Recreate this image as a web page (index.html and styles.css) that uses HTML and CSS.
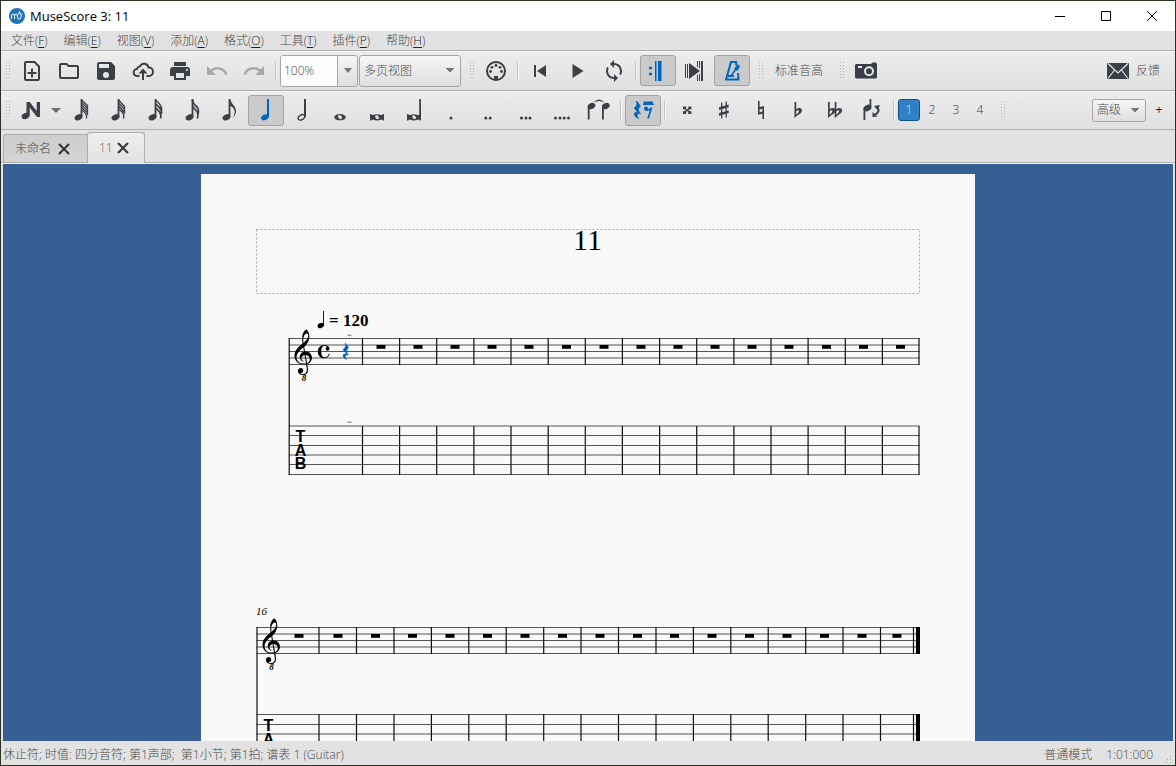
FILE: index.html
```html
<!DOCTYPE html>
<html lang="zh-CN">
<head>
<meta charset="utf-8">
<title>MuseScore 3: 11</title>
<link rel="stylesheet" href="styles.css">
</head>
<body>
<svg class="defs" aria-hidden="true">
  <defs>
    <symbol id="i-new" viewBox="0 0 24 24"><path fill="none" stroke="currentColor" stroke-width="2" stroke-linejoin="round" d="M6 3h8.500l4.500 4.500V20a1 1 0 0 1-1 1H6a1 1 0 0 1-1-1V4a1 1 0 0 1 1-1z"/><path d="M11 9.500h2V13h3.500v2H13v3.500h-2V15H7.500v-2H11z"/></symbol>
    <symbol id="i-open" viewBox="0 0 24 24"><path d="M20 6h-8l-2-2H4a2 2 0 0 0-2 2v12c0 1.100.9 2 2 2h16a2 2 0 0 0 2-2V8a2 2 0 0 0-2-2zm0 12H4V6h5.200l2 2H20z"/></symbol>
    <symbol id="i-save" viewBox="0 0 24 24"><path d="M17 3H5a2 2 0 0 0-2 2v14c0 1.100.9 2 2 2h14a2 2 0 0 0 2-2V7l-4-4zm-5 16a3 3 0 1 1 0-6 3 3 0 0 1 0 6zm3-10H5V5h10v4z"/></symbol>
    <symbol id="i-cloud" viewBox="0 0 24 24"><path fill="none" stroke="currentColor" stroke-width="2" d="M8.500 17H6.500a3.500 3.500 0 0 1-.6-7A4 4 0 0 1 9 7.200 4.500 4.500 0 0 1 17.500 8.500 4.200 4.200 0 0 1 18 17H15.500"/><path d="M12 9.500l4.500 5H13V21h-2v-6.500H7.500z"/></symbol>
    <symbol id="i-print" viewBox="0 0 24 24"><path d="M19 8H5a3 3 0 0 0-3 3v6h4v4h12v-4h4v-6a3 3 0 0 0-3-3zm-3 11H8v-5h8v5zm3-7a1 1 0 1 1 0-2 1 1 0 0 1 0 2zM18 3H6v4h12V3z"/></symbol>
    <symbol id="i-undo" viewBox="0 0 24 24"><path d="M12.500 8c-2.650 0-5.050.99-6.900 2.600L2 7v9h9l-3.620-3.620c1.390-1.160 3.160-1.880 5.120-1.880 3.540 0 6.550 2.310 7.600 5.500l2.370-.78C21.080 11.030 17.150 8 12.500 8z"/></symbol>
    <symbol id="i-redo" viewBox="0 0 24 24"><path d="M11.500 8c2.650 0 5.050.99 6.900 2.600L22 7v9h-9l3.620-3.620c-1.390-1.160-3.160-1.880-5.120-1.880-3.540 0-6.550 2.310-7.600 5.500l-2.370-.78C2.920 11.030 6.850 8 11.500 8z"/></symbol>
    <symbol id="i-midi" viewBox="0 0 24 24"><circle cx="12" cy="12" r="9" fill="none" stroke="currentColor" stroke-width="2"/><circle cx="6.500" cy="12.500" r="1.400"/><circle cx="8" cy="8.300" r="1.400"/><circle cx="12" cy="6.500" r="1.400"/><circle cx="16" cy="8.300" r="1.400"/><circle cx="17.500" cy="12.500" r="1.400"/><path d="M10 17h4v4h-4z"/></symbol>
    <symbol id="i-rewind" viewBox="0 0 24 24"><path d="M6 6h2v12H6zM18 6v12L9 12z"/></symbol>
    <symbol id="i-play" viewBox="0 0 24 24"><path d="M7.500 5l11 7-11 7z"/></symbol>
    <symbol id="i-loop" viewBox="0 0 24 24"><path d="M12 4V1L8 5l4 4V6c3.310 0 6 2.690 6 6 0 1.010-.25 1.970-.7 2.800l1.460 1.460C19.540 15.030 20 13.570 20 12c0-4.420-3.580-8-8-8zm0 14c-3.310 0-6-2.690-6-6 0-1.010.25-1.970.7-2.800L5.240 7.740C4.460 8.970 4 10.430 4 12c0 4.420 3.580 8 8 8v3l4-4-4-4v3z"/></symbol>
    <symbol id="i-repeat" viewBox="0 0 24 24"><circle cx="4.500" cy="9" r="1.600"/><circle cx="4.500" cy="15" r="1.600"/><path d="M9 2h1.500v20H9zM12 2h3.500v20H12z"/></symbol>
    <symbol id="i-pan" viewBox="0 0 24 24"><path d="M2 5h1v14H2zM4 5h1v14H4zM6 4l11 8-11 8zM14 2h1v6.500l-1-1zM14 16.500l1-1V22h-1zM16 2h1v7.500l-1-1zM16 15.500l1-1V22h-1zM18 2h2v20h-2z"/></symbol>
    <symbol id="i-metro" viewBox="0 0 24 24"><path fill="none" stroke="currentColor" stroke-width="2" d="M16.500 7L16 3h-5L6 20.500h12.500L18 14M8 17h6"/><path fill="none" stroke="currentColor" stroke-width="1.500" d="M10.500 17.500L19 6"/><path d="M14 9.500l4-3.500 2 2-3 4z"/></symbol>
    <symbol id="i-camera" viewBox="0 0 24 24"><path fill-rule="evenodd" d="M3 5h14l1.500-1.500H22L23 5v13.500l-1 1H2l-1-1V6l1-1zM15 7.200a5 5 0 1 0 0 10 5 5 0 0 0 0-10zM4 7v2h4V7z"/><circle cx="15" cy="12.200" r="3"/></symbol>
    <symbol id="i-mail" viewBox="0 0 24 24"><rect x="1" y="4" width="22" height="16" rx="1"/><path fill="none" stroke="#e6e6e6" stroke-width="1.200" d="M2 4.500l10 9.500 10-9.500M2 19.500L8.500 11M22 19.500L15.500 11"/></symbol>

    <symbol id="i-input" viewBox="0 0 24 24"><ellipse cx="6.500" cy="18" rx="4" ry="3" transform="rotate(-25 6.500 18)"/><path d="M7.500 4h3.200l7 9V4H21v15h-3l-7.300-9.500V18l-3.200-1z"/></symbol>
    <symbol id="head" viewBox="0 0 24 24"><ellipse cx="9.500" cy="19.300" rx="4.100" ry="2.900" transform="rotate(-25 9.500 19.300)"/><path d="M11.600 1h1.800v18h-1.800z"/></symbol>
    <symbol id="i-n64" viewBox="0 0 24 24"><use href="#head"/><path fill="none" stroke="currentColor" stroke-width="1.300" d="M12.500 2l6 5.500M12.500 4.500l6 5.500M12.500 7l6 5.500M12.500 9.500l6 5.500M12.500 12q6 3.500 5 8.500M18.500 7v10"/></symbol>
    <symbol id="i-n32" viewBox="0 0 24 24"><use href="#head"/><path fill="none" stroke="currentColor" stroke-width="1.400" d="M12.500 2l6 6.500M12.500 5l6 6.500M12.500 8l6 6.500M12.500 11q6.500 4 5 9.500M18.500 8v8"/></symbol>
    <symbol id="i-n16b" viewBox="0 0 24 24"><use href="#head"/><path fill="none" stroke="currentColor" stroke-width="1.600" d="M12.500 2q6 5 6 8.500M12.500 6q6 4.500 6 8.500M12.500 10q7 5 5 10.500M18.500 10v6"/></symbol>
    <symbol id="i-n16" viewBox="0 0 24 24"><use href="#head"/><path fill="none" stroke="currentColor" stroke-width="1.700" d="M12.500 2q0 3 3.500 6 3.500 3 2 8M12.500 8q1 2 3.500 4.500 3 3 1.300 8"/></symbol>
    <symbol id="i-n8" viewBox="0 0 24 24"><use href="#head"/><path d="M12 1h1.200c.5 4.500 6 7 5.800 12.500-.1 2.500-1.500 5-2.700 6 1-3 1.700-5 1.200-7-.6-2.500-3-4.500-5.500-5z"/></symbol>
    <symbol id="i-n4" viewBox="0 0 24 24"><ellipse cx="11" cy="19.300" rx="4" ry="2.700" transform="rotate(-25 11 19.300)"/><path d="M13 1h2v18h-2z"/></symbol>
    <symbol id="i-n2" viewBox="0 0 24 24"><ellipse cx="10.500" cy="19.300" rx="3.600" ry="2.300" fill="none" stroke="currentColor" stroke-width="1.400" transform="rotate(-30 10.500 19.300)"/><path d="M13 1h2v18h-2z"/></symbol>
    <symbol id="i-n1" viewBox="0 0 24 24"><path fill-rule="evenodd" d="M6.300 19.200a5.700 3.100 0 1 0 11.400 0 5.700 3.100 0 1 0-11.400 0zM10 17.800c.8-1.200 2.600-1 3.500.4.900 1.500.6 3-.7 3s-3.500-2-2.800-3.400z"/></symbol>
    <symbol id="i-breve" viewBox="0 0 24 24"><path d="M5 16h1.500v6.500H5zM17.500 16H19v6.500h-1.500z"/><path fill-rule="evenodd" d="M6 17h2.500c2-1 5-1 7 0H18v4.700h-2.500c-2 1-5 1-7 0H6zM10.300 18c-.6 1.200.8 3.200 2.200 3.200 1.200 0 1.700-1 1.200-2.300-.6-1.600-2.800-2.300-3.400-.9z"/></symbol>
    <symbol id="i-longa" viewBox="0 0 24 24"><use href="#i-breve"/><path d="M17.200 1H19v20h-1.800z"/></symbol>
    <symbol id="i-dot1" viewBox="0 0 24 24"><circle cx="12" cy="20" r="1.500"/></symbol>
    <symbol id="i-dot2" viewBox="0 0 24 24"><circle cx="9.800" cy="20" r="1.500"/><circle cx="14.200" cy="20" r="1.500"/></symbol>
    <symbol id="i-dot3" viewBox="0 0 24 24"><circle cx="8.500" cy="20" r="1.500"/><circle cx="13" cy="20" r="1.500"/><circle cx="17" cy="20" r="1.500"/></symbol>
    <symbol id="i-dot4" viewBox="0 0 24 24"><circle cx="5.500" cy="20" r="1.500"/><circle cx="10" cy="20" r="1.500"/><circle cx="14.200" cy="20" r="1.500"/><circle cx="18.500" cy="20" r="1.500"/></symbol>
    <symbol id="i-tie" viewBox="0 0 24 24"><ellipse cx="4.500" cy="8" rx="4" ry="2.900" transform="rotate(-25 4.500 8)"/><ellipse cx="18.800" cy="8" rx="4" ry="2.900" transform="rotate(-25 18.800 8)"/><path d="M.8 8h1.800v13.500H.8zM15 8h1.800v13.500H15zM6.500 4.500q5.500-6 11 0-5.500-3.200-11 0z"/></symbol>
    <symbol id="i-rest" viewBox="0 0 24 24"><use href="#qrest" x="2.500" y="3" stroke="currentColor" stroke-width=".8"/><path d="M12.500 3.500h9.500v3h-9.500zM12 6h11v1H12z"/><circle cx="15" cy="10.500" r="2"/><path fill="none" stroke="currentColor" stroke-width="1.700" d="M14.500 12q4 .8 6-2.300L17 20.500"/></symbol>
    <symbol id="i-dsharp" viewBox="0 0 24 24"><path d="M8 8.500h3l.2 2 1 .9 1-.9.200-2h3v2.700l-2.300.3-.8.700.8.700 2.300.3V16h-3l-.2-2-1-.9-1 .9L11 16H8v-2.800l2.300-.3.800-.7-.8-.7L8 11.200z"/></symbol>
    <symbol id="i-sharp" viewBox="0 0 24 24"><path d="M9 4.500h1.300v16H9zM13.500 3.500h1.300v16h-1.300zM7 9.200l9.700-2.600v2.700L7 11.900zM7 15l9.700-2.600v2.700L7 17.700z"/></symbol>
    <symbol id="i-nat" viewBox="0 0 24 24"><path fill-rule="evenodd" d="M9 3h1.600v6L15 8v13h-1.600v-5.300L9 16.700zM10.600 11.500v2.800l2.800-.7v-2.800z"/></symbol>
    <symbol id="i-flat" viewBox="0 0 24 24"><path fill-rule="evenodd" d="M8.500 4h1.700v7.200c2-1.900 6-1.800 5.800 1.400-.2 3-4.500 4.400-7.500 7.600zM10.200 13.500v3.200c1.800-1.400 3.100-3.200 2.600-4-.6-.8-1.900-.2-2.600.8z"/></symbol>
    <symbol id="i-dflat" viewBox="0 0 24 24"><use href="#i-flat" x="-3.500"/><use href="#i-flat" x="3.200"/></symbol>
    <symbol id="i-flip" viewBox="0 0 24 24"><ellipse cx="7.500" cy="10" rx="4.200" ry="3" transform="rotate(-30 7.500 10)"/><path d="M3.500 10h1.800v12H3.500zM9.500 1h1.800v8H9.500z"/><path fill="none" stroke="currentColor" stroke-width="2" d="M16.500 9Q21.500 13 14.500 17"/><path d="M14 8l6-1-2.500 5zM12.500 14l5 4.500-5 .5z"/></symbol>

    <path id="qrest" d="M3.200 0C4.500 2 6.200 3.800 6.800 5.200 5.400 6.800 4.600 7.900 5 9.400 5.300 10.600 6.400 11.900 7.200 12.900 5.200 12.200 3.700 12.500 3.600 14 3.500 15.100 4.300 16.200 5.200 17.400 3 16.700.6 14.700.9 12.700 1.200 11.200 2.900 10.900 4.400 11.300L.7 7.200C2.500 5.600 3.500 4.600 3.300 2.800 3.200 1.700 2.600 1 3.200 0z"/>
    <path id="mrest" d="M-4.500 0h9v3.800h-9z"/>
    <path id="gclef" d="M376 415l25 -145c3 -18 3 -18 29 -18c147 0 241 -113 241 -241c0 -113 -67 -198 -168 -238c-14 -6 -15 -5 -13 -17c11 -62 29 -157 29 -214c0 -170 -130 -200 -197 -200c-151 0 -190 98 -190 163c0 62 40 115 107 115c61 0 96 -47 96 -102c0 -58 -36 -85 -67 -94c-23 -7 -32 -10 -32 -17c0 -13 26 -29 80 -29c59 0 159 18 159 166c0 47 -15 134 -27 201c-2 12 -4 11 -15 9c-20 -4 -46 -6 -69 -6c-245 0 -364 165 -364 339c0 202 153 345 297 464c12 10 11 12 9 24c-7 41 -14 106 -14 164c0 104 24 229 98 311c20 22 51 48 65 48c11 0 37 -28 52 -50c41 -60 65 -146 65 -233c0 -153 -82 -280 -190 -381c-6 -6 -8 -7 -6 -19zM470 943c-61 0 -133 -96 -133 -252c0 -32 2 -66 6 -92c2 -13 6 -14 13 -8c79 69 174 159 174 270c0 55 -27 82 -60 82zM361 262l-21 128c-2 11 -4 12 -14 4c-47 -38 -93 -75 -153 -142c-83 -94 -93 -173 -93 -232c0 -139 113 -236 288 -236c20 0 40 2 56 5c15 3 16 3 14 14l-50 298c-2 11 -4 12 -20 8c-61 -17 -100 -60 -100 -117c0 -46 30 -89 72 -107c7 -3 15 -6 15 -13c0 -6 -4 -11 -12 -11c-7 0 -19 3 -27 6c-68 23 -115 87 -115 177c0 85 57 164 145 194c18 6 18 5 15 24zM430 103l49 -285c2 -12 4 -12 16 -6c56 28 94 79 94 142c0 88 -67 156 -148 163c-12 1 -13 -2 -11 -14z"/>
  </defs>
</svg>

<div class="window">
  <header class="titlebar">
    <svg class="logo" viewBox="0 0 16 16" aria-hidden="true"><circle cx="8" cy="8" r="8" fill="#1d74b5"/><path d="M2.500 11V8q0-2 1.500-2t1.500 2v3M5.500 8q0-2 1.500-2t1.500 2v1.500q0 1.500 1.700 1.500t1.800-2q0-2 1-3.500M9.500 6.500l1-3 1 3" fill="none" stroke="#fff"/></svg>
    <h1 class="title">MuseScore 3: 11</h1>
    <div class="wincontrols">
      <button class="wc" aria-label="最小化"><svg viewBox="0 0 11 11"><path d="M0 5.500h10" /></svg></button>
      <button class="wc" aria-label="最大化"><svg viewBox="0 0 11 11"><path d="M.5.500h9v9h-9z"/></svg></button>
      <button class="wc" aria-label="关闭"><svg viewBox="0 0 11 11"><path d="M0 0l10 10M10 0L0 10"/></svg></button>
    </div>
  </header>

  <nav class="menubar">
    <button class="menu">文件(<u>F</u>)</button>
    <button class="menu">编辑(<u>E</u>)</button>
    <button class="menu">视图(<u>V</u>)</button>
    <button class="menu">添加(<u>A</u>)</button>
    <button class="menu">格式(<u>O</u>)</button>
    <button class="menu">工具(<u>T</u>)</button>
    <button class="menu">插件(<u>P</u>)</button>
    <button class="menu">帮助(<u>H</u>)</button>
  </nav>

  <div class="toolbar main">
    <span class="handle first"></span>
    <button class="tb" aria-label="新建"><svg><use href="#i-new"/></svg></button>
    <button class="tb" aria-label="打开"><svg><use href="#i-open"/></svg></button>
    <button class="tb" aria-label="保存"><svg><use href="#i-save"/></svg></button>
    <button class="tb" aria-label="在线保存"><svg><use href="#i-cloud"/></svg></button>
    <button class="tb" aria-label="打印"><svg><use href="#i-print"/></svg></button>
    <button class="tb off" aria-label="撤销" disabled><svg><use href="#i-undo"/></svg></button>
    <button class="tb off" aria-label="重做" disabled><svg><use href="#i-redo"/></svg></button>
    <span class="sep"></span>
    <div class="combo">
      <input class="zoom" type="text" value="100%" aria-label="缩放">
      <button class="drop" aria-label="缩放选项"></button>
    </div>
    <select class="select view" aria-label="视图模式"><option>多页视图</option></select>
    <span class="handle"></span>
    <button class="tb" aria-label="MIDI 输入"><svg><use href="#i-midi"/></svg></button>
    <span class="sep"></span>
    <button class="tb" aria-label="回到开头"><svg><use href="#i-rewind"/></svg></button>
    <button class="tb" aria-label="播放"><svg><use href="#i-play"/></svg></button>
    <button class="tb" aria-label="循环播放"><svg><use href="#i-loop"/></svg></button>
    <span class="sep"></span>
    <button class="tb on" aria-label="播放反复" aria-pressed="true"><svg><use href="#i-repeat"/></svg></button>
    <button class="tb" aria-label="跟随乐谱"><svg><use href="#i-pan"/></svg></button>
    <button class="tb on" aria-label="节拍器" aria-pressed="true"><svg><use href="#i-metro"/></svg></button>
    <span class="handle"></span>
    <button class="textbtn">标准音高</button>
    <span class="handle"></span>
    <button class="tb" aria-label="图像截取"><svg><use href="#i-camera"/></svg></button>
    <button class="feedback"><svg aria-hidden="true"><use href="#i-mail"/></svg>反馈</button>
  </div>

  <div class="toolbar">
    <span class="handle first"></span>
    <button class="tb input" aria-label="音符输入"><svg><use href="#i-input"/></svg><span class="arrow"></span></button>
    <button class="tb" aria-label="128 分音符"><svg><use href="#i-n64"/></svg></button>
    <button class="tb" aria-label="64 分音符"><svg><use href="#i-n32"/></svg></button>
    <button class="tb" aria-label="32 分音符"><svg><use href="#i-n16b"/></svg></button>
    <button class="tb" aria-label="16 分音符"><svg><use href="#i-n16"/></svg></button>
    <button class="tb" aria-label="8 分音符"><svg><use href="#i-n8"/></svg></button>
    <button class="tb on" aria-label="四分音符" aria-pressed="true"><svg><use href="#i-n4"/></svg></button>
    <button class="tb" aria-label="二分音符"><svg><use href="#i-n2"/></svg></button>
    <button class="tb" aria-label="全音符"><svg><use href="#i-n1"/></svg></button>
    <button class="tb" aria-label="二全音符"><svg><use href="#i-breve"/></svg></button>
    <button class="tb" aria-label="四全音符"><svg><use href="#i-longa"/></svg></button>
    <button class="tb" aria-label="附点"><svg><use href="#i-dot1"/></svg></button>
    <button class="tb" aria-label="双附点"><svg><use href="#i-dot2"/></svg></button>
    <button class="tb" aria-label="三附点"><svg><use href="#i-dot3"/></svg></button>
    <button class="tb" aria-label="四附点"><svg><use href="#i-dot4"/></svg></button>
    <button class="tb" aria-label="延音线"><svg><use href="#i-tie"/></svg></button>
    <span class="sep"></span>
    <button class="tb on" aria-label="休止符" aria-pressed="true"><svg><use href="#i-rest"/></svg></button>
    <span class="sep"></span>
    <button class="tb" aria-label="重升号"><svg><use href="#i-dsharp"/></svg></button>
    <button class="tb" aria-label="升号"><svg><use href="#i-sharp"/></svg></button>
    <button class="tb" aria-label="还原号"><svg><use href="#i-nat"/></svg></button>
    <button class="tb" aria-label="降号"><svg><use href="#i-flat"/></svg></button>
    <button class="tb" aria-label="重降号"><svg><use href="#i-dflat"/></svg></button>
    <button class="tb" aria-label="翻转方向"><svg><use href="#i-flip"/></svg></button>
    <span class="sep"></span>
    <div class="voices">
      <button class="voice current" aria-pressed="true">1</button>
      <button class="voice">2</button>
      <button class="voice">3</button>
      <button class="voice">4</button>
    </div>
    <span class="handle"></span>
    <div class="workspace">
      <select class="select level" aria-label="工作区"><option>高级</option></select>
      <button class="plus" aria-label="新建工作区">+</button>
    </div>
  </div>

  <div class="tabs">
    <div class="tab"><button class="tabname">未命名</button><button class="close" aria-label="关闭 未命名"><svg viewBox="0 0 12 12"><path d="M1 1l10 10M11 1L1 11"/></svg></button></div>
    <div class="tab active"><button class="tabname">11</button><button class="close" aria-label="关闭 11"><svg viewBox="0 0 12 12"><path d="M1 1l10 10M11 1L1 11"/></svg></button></div>
  </div>

  <main class="canvas">
    <svg class="page" viewBox="201 174 774 1000" role="img" aria-label="乐谱 11">
      <rect x="256.500" y="229.500" width="663" height="64" class="frame"/>
      <text x="587.500" y="250" class="score-title">11</text>

      <g class="tempo"><ellipse cx="320.800" cy="325.500" rx="3.400" ry="2.400" transform="rotate(-25 320.800 325.500)"/><path d="M323 311h.9v14h-.9z"/><text x="329" y="326">= 120</text></g>
      <path class="staff" d="M289 338.500H919.500M289 345H919.500M289 351.500H919.500M289 358H919.500M289 364.500H919.500M289 426H919.500M289 435.500H919.500M289 445.500H919.500M289 455H919.500M289 464.500H919.500M289 474.500H919.500"/>
      <path class="bars" d="M289.200 338V475M362.500 338v27M399.600 338v27M436.700 338v27M473.900 338v27M511 338v27M548.200 338v27M585.300 338v27M622.400 338v27M659.600 338v27M696.700 338v27M733.900 338v27M771 338v27M808.100 338v27M845.300 338v27M882.400 338v27M919 338v27M362.500 426v49M399.600 426v49M436.700 426v49M473.900 426v49M511 426v49M548.200 426v49M585.300 426v49M622.400 426v49M659.600 426v49M696.700 426v49M733.900 426v49M771 426v49M808.100 426v49M845.300 426v49M882.400 426v49M919 426v49"/>
      <use href="#gclef" transform="translate(294.500 358) scale(.026 -.026)"/>
      <text x="304" y="381" class="octave">8</text>
      <path d="M329.500 348.600a2 2 0 1 1-2.700-1.700c-.5-.8-1.300-1-2.200-1-2.500 0-3.300 2.300-3.300 5.600s.8 5.800 3.300 5.800c2.200 0 3.900-1.500 4.400-3.900h.8c-.4 3-2.700 4.900-5.600 4.900-3.800 0-6.400-2.800-6.400-6.600s2.700-6.600 6.500-6.600c3 0 5 1.500 5.200 3.500z"/>
      <use href="#qrest" x="342" y="342.500" fill="#0065bf"/>
      <path d="M347.500 334.500h4v1.500h-4zM347.500 421.500h4v1.500h-4z" fill="#999"/>
      <g>
        <use href="#mrest" x="381" y="345"/><use href="#mrest" x="418" y="345"/><use href="#mrest" x="455" y="345"/><use href="#mrest" x="492" y="345"/><use href="#mrest" x="529" y="345"/><use href="#mrest" x="566.500" y="345"/><use href="#mrest" x="604" y="345"/><use href="#mrest" x="641" y="345"/><use href="#mrest" x="678" y="345"/><use href="#mrest" x="715" y="345"/><use href="#mrest" x="752" y="345"/><use href="#mrest" x="789" y="345"/><use href="#mrest" x="826.500" y="345"/><use href="#mrest" x="863.500" y="345"/><use href="#mrest" x="900.500" y="345"/>
      </g>
      <g class="tab-clef"><text x="300.500" y="442">T</text><text x="300.500" y="456">A</text><text x="300.500" y="469">B</text></g>

      <text x="256" y="615" class="number">16</text>
      <path class="staff" d="M256.500 627.500H919M256.500 634H919M256.500 640.500H919M256.500 647H919M256.500 653.500H919M256.500 714.500H919M256.500 724.500H919M256.500 734H919M256.500 743.500H919M256.500 753.500H919M256.500 763.500H919"/>
      <path class="bars" d="M257 627V764M319 627v27M356.500 627v27M394 627v27M431.400 627v27M468.800 627v27M506.200 627v27M543.700 627v27M581 627v27M618.500 627v27M656 627v27M693.400 627v27M730.800 627v27M768.200 627v27M805.700 627v27M843 627v27M880.500 627v27M913.500 627v27M319 714v50M356.500 714v50M394 714v50M431.400 714v50M468.800 714v50M506.200 714v50M543.700 714v50M581 714v50M618.500 714v50M656 714v50M693.400 714v50M730.800 714v50M768.200 714v50M805.700 714v50M843 714v50M880.500 714v50M913.500 714v50"/>
      <path d="M916 627h4v27h-4zM916 714h4v50h-4z"/>
      <use href="#gclef" transform="translate(262.500 647) scale(.026 -.026)"/>
      <text x="271.500" y="670" class="octave">8</text>
      <g>
        <use href="#mrest" x="299" y="634"/><use href="#mrest" x="338" y="634"/><use href="#mrest" x="375.500" y="634"/><use href="#mrest" x="412.500" y="634"/><use href="#mrest" x="450" y="634"/><use href="#mrest" x="487.500" y="634"/><use href="#mrest" x="525" y="634"/><use href="#mrest" x="562.500" y="634"/><use href="#mrest" x="600" y="634"/><use href="#mrest" x="637.500" y="634"/><use href="#mrest" x="674.500" y="634"/><use href="#mrest" x="712" y="634"/><use href="#mrest" x="749.500" y="634"/><use href="#mrest" x="787" y="634"/><use href="#mrest" x="824.500" y="634"/><use href="#mrest" x="862" y="634"/><use href="#mrest" x="897" y="634"/>
      </g>
      <g class="tab-clef"><text x="268.500" y="731">T</text><text x="268.500" y="745">A</text></g>
    </svg>
  </main>

  <footer class="status">
    <span>休止符; 时值: 四分音符; 第1声部;&nbsp; 第1小节; 第1拍; 谱表 1 (Guitar)</span>
    <span class="mode">普通模式</span>
    <span class="position">1:01:000</span>
    <span class="grip"></span>
  </footer>
</div>
</body>
</html>
```
FILE: styles.css
```css
* { box-sizing: border-box; }

body {
  margin: 0;
  font: 300 12px/16px "Open Sans", "Noto Sans CJK SC", sans-serif;
  color: #4a4a4a;
}

button, input, select {
  font: inherit;
  color: inherit;
  margin: 0;
  padding: 0;
  border: 0;
  background: none;
}

svg { fill: currentColor; flex: none; }

.defs { position: absolute; width: 0; height: 0; }

.window {
  display: flex;
  flex-direction: column;
  height: 100vh;
  border: 1px solid #2b3324;
  background: #e2e2e2;
  overflow: hidden;
}

.titlebar {
  display: flex;
  align-items: center;
  flex: none;
  height: 30px;
  padding-left: 8px;
  gap: 5px;
  background: #fff;
  color: #000;
}
.logo { width: 16px; height: 16px; }
.title { margin: 0; font-size: 13px; font-weight: 400; }
.wincontrols { display: flex; margin-left: auto; }
.wc { width: 46px; height: 30px; display: grid; place-items: center; }
.wc svg { width: 11px; height: 11px; fill: none; stroke: #000; }

.menubar { display: flex; flex: none; height: 19px; padding-left: 2px; }
.menu { padding: 0 8px; white-space: nowrap; }
.menu u { text-underline-offset: 2px; color: #222; }

.toolbar {
  display: flex;
  align-items: center;
  flex: none;
  gap: 1px;
  height: 39px;
  padding-left: 5px;
  border-top: 1px solid #b0b0b0;
  background: linear-gradient(#ededed, #e0e0e0);
  box-shadow: inset 0 1px #f4f4f4;
}
.toolbar.main { height: 40px; }
.handle {
  flex: none;
  width: 5px;
  height: 18px;
  margin: 0 2px 0 8px;
  background: conic-gradient(from 270deg at 1px 1px, #b0b0b0 90deg, transparent 0) 0 0 / 3px 3px;
}
.handle.first { margin-left: 0; }
.sep {
  flex: none;
  width: 2px;
  height: 20px;
  margin: 0 2px;
  border-left: 1px solid #c4c4c4;
  background: #f6f6f6;
}
.tb {
  flex: none;
  display: flex;
  align-items: center;
  justify-content: center;
  width: 36px;
  height: 31px;
  border: 1px solid transparent;
  border-radius: 3px;
  color: #3b3f46;
}
.tb svg { width: 24px; height: 24px; overflow: visible; }
.tb.on { border-color: #a3a3a3; background: #cacaca; color: #0065bf; }
.tb.off { color: #a8a8a8; }
.tb.input { width: 48px; justify-content: flex-start; padding-left: 4px; gap: 8px; }
.arrow {
  border: 5px solid transparent;
  border-top-color: #6b6b6b;
  border-bottom-width: 0;
}

.combo, .select {
  height: 32px;
  border: 1px solid #a6a6a6;
  border-radius: 3px;
  background: linear-gradient(#f6f6f6, #dedede);
}
.combo { display: flex; flex: none; width: 78px; overflow: hidden; }
.zoom { flex: 1; min-width: 0; padding-left: 3px; background: #fcfcfc; border-right: 1px solid #a6a6a6; }
.drop { width: 19px; display: grid; place-items: center; }
.drop::after { content: ""; border: 4px solid transparent; border-top: 5px solid #777; border-bottom: 0; }
.select {
  appearance: none;
  background:
    linear-gradient(to bottom right, #777 50%, transparent 50%) right 6px center / 4px 5px no-repeat,
    linear-gradient(to bottom left, #777 50%, transparent 50%) right 10px center / 4px 5px no-repeat,
    linear-gradient(#f6f6f6, #dedede);
}
.view { width: 102px; padding-left: 4px; }
.level { width: 54px; height: 23px; padding-left: 4px; }

.textbtn { padding: 0 8px; white-space: nowrap; }
.feedback { display: flex; align-items: center; gap: 6px; margin-left: auto; margin-right: 15px; white-space: nowrap; }
.feedback svg { width: 24px; height: 24px; color: #3b3f46; }

.voices { display: flex; flex: none; }
.voice { width: 24px; height: 22px; border: 1px solid transparent; border-radius: 3px; color: #333; }
.voice.current { width: 22px; border-color: #0d4f90; background: #3180c6; color: #cfe3f5; }
.workspace { display: flex; gap: 8px; margin-left: auto; margin-right: 11px; }
.plus { width: 10px; color: #222; font-weight: 400; }

.tabs {
  display: flex;
  align-items: flex-end;
  flex: none;
  height: 35px;
  padding-left: 2px;
  border-top: 1px solid #b0b0b0;
  border-bottom: 1px solid #f0f0f0;
  box-shadow: inset 0 -1px #b0b0b0;
}
.tab {
  display: flex;
  align-items: center;
  gap: 7px;
  height: 29px;
  padding: 0 17px 0 11px;
  border: 1px solid #adadad;
  border-right: 0;
  border-radius: 3px 0 0 0;
  background: linear-gradient(#cdcdcd, #d4d4d4);
}
.tab.active {
  gap: 4px;
  height: 31px;
  padding-right: 15px;
  border: 1px solid #adadad;
  border-bottom: 0;
  border-radius: 3px 3px 0 0;
  background: linear-gradient(#eee, #e2e2e2);
  color: #666;
}
.close { width: 12px; height: 12px; display: grid; }
.close svg { width: 12px; height: 12px; fill: none; stroke: #333; stroke-width: 2; }

.canvas {
  flex: 1;
  min-height: 0;
  margin: 0 2px;
  padding-top: 10px;
  background: #375f93;
  overflow: hidden;
}
.page {
  display: block;
  width: 774px;
  margin: 0 auto;
  background: #f9f9f9;
  color: #000;
}
.frame { fill: none; stroke: #a8a8a8; stroke-dasharray: 2 2; }
.staff { fill: none; stroke: #555; }
.bars { fill: none; stroke: #111; stroke-width: 1.2; }
.score-title { font: 400 30px "Liberation Serif", serif; text-anchor: middle; }
.tempo { font: 700 17px "Liberation Serif", serif; }
.octave { font: italic 700 9px "Liberation Serif", serif; text-anchor: middle; }
.number { font: italic 400 11px "Liberation Serif", serif; }
.tab-clef { font: 700 16px "Liberation Sans", sans-serif; text-anchor: middle; }

.status {
  display: flex;
  align-items: center;
  flex: none;
  height: 24px;
  padding: 3px 2px 0;
  white-space: nowrap;
  overflow: hidden;
}
.status .mode { margin-left: auto; }
.status .position { margin-left: 14px; }
.grip {
  align-self: flex-end;
  width: 12px;
  height: 12px;
  margin-left: 8px;
  background: conic-gradient(from 270deg at 1px 1px, #aaa 90deg, transparent 0) 0 0 / 3px 3px;
  clip-path: polygon(100% 0, 100% 100%, 0 100%);
}
```
